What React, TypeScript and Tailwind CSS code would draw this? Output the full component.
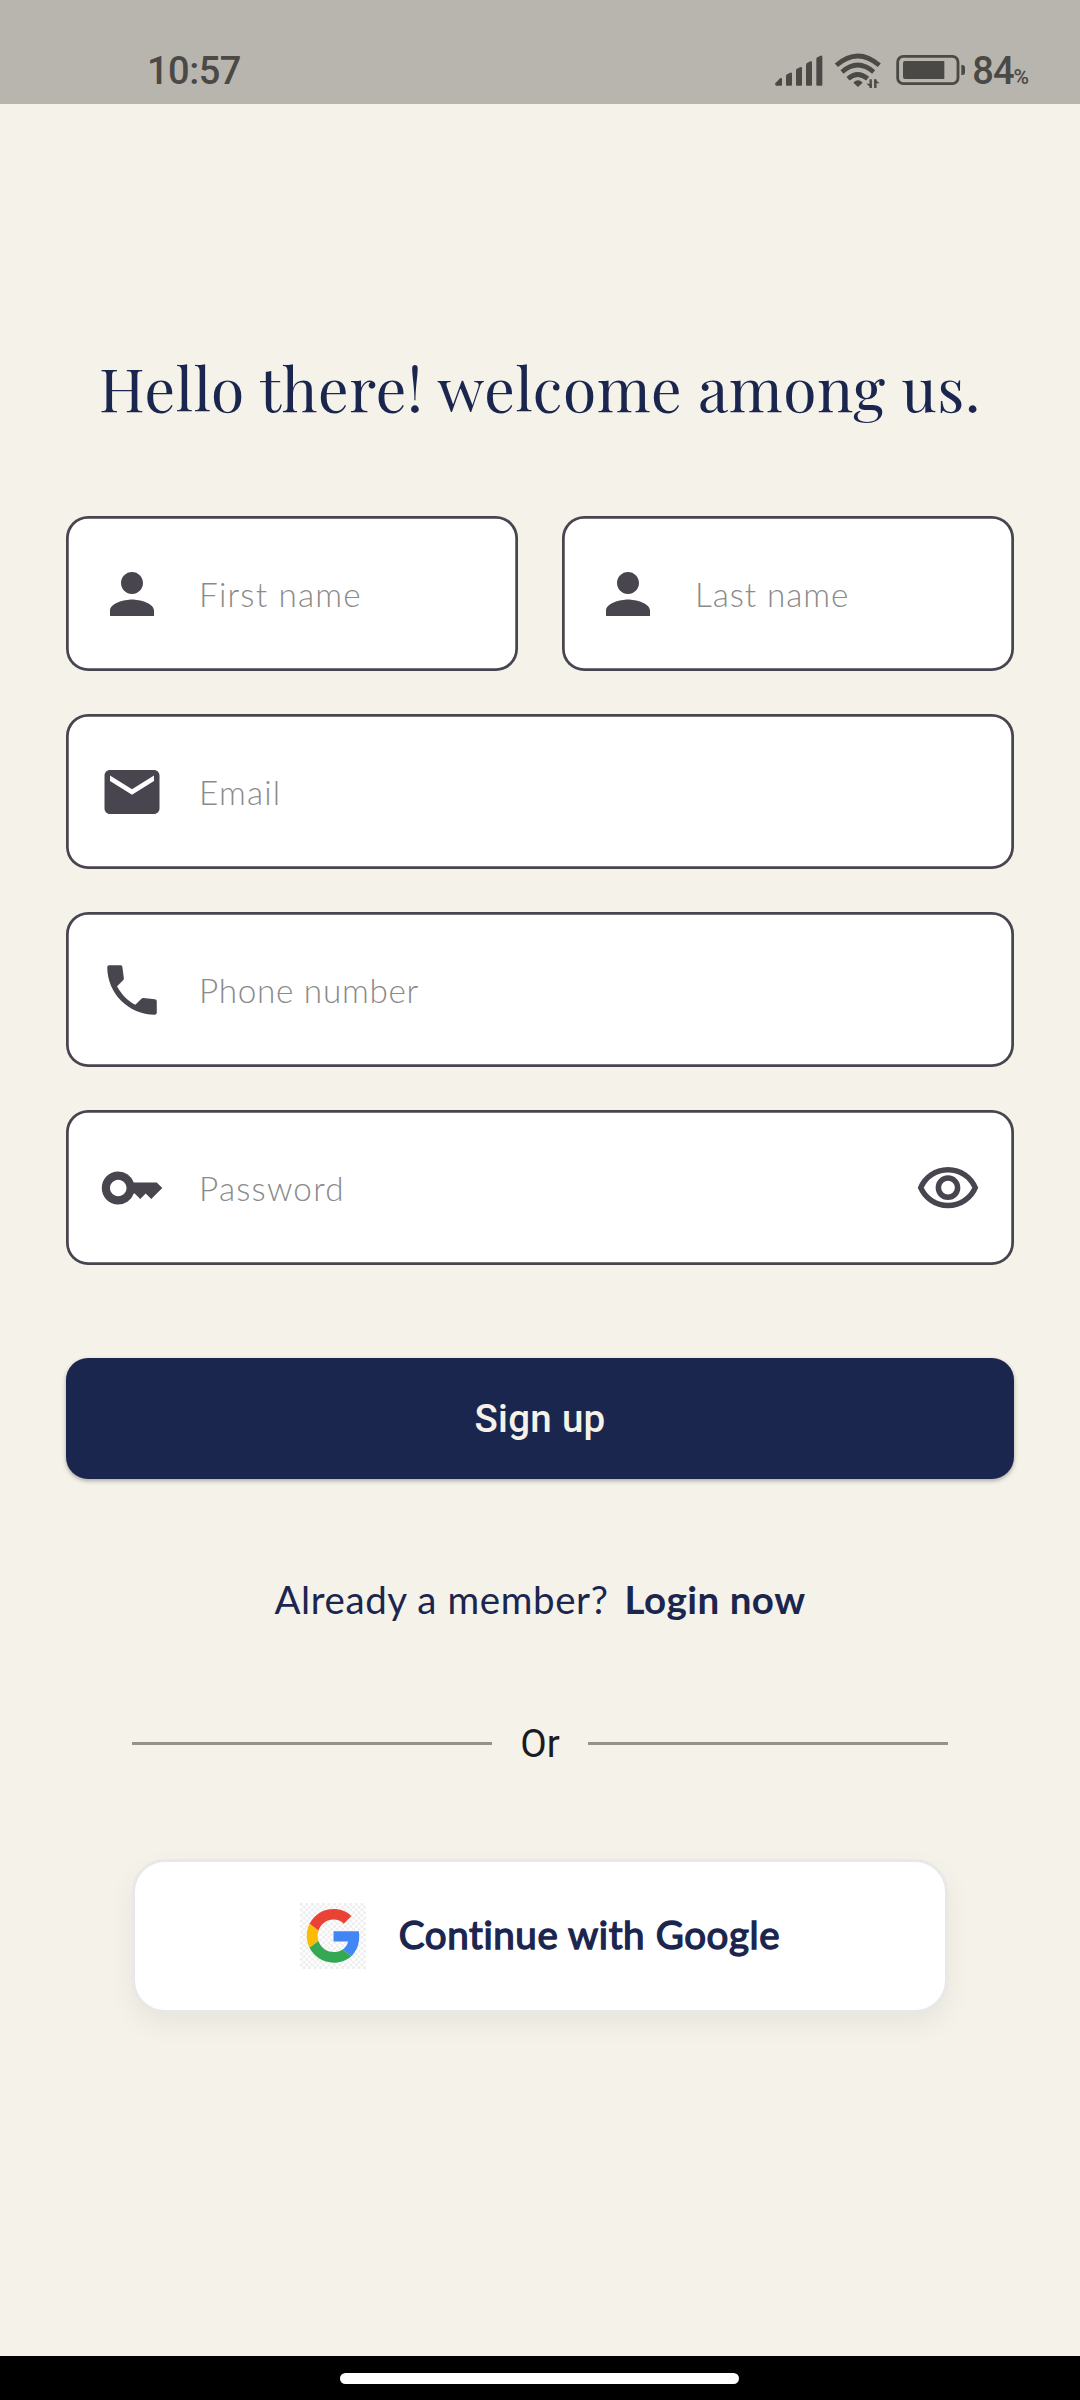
import type { ReactNode } from "react";
import { MdEmail, MdKey, MdOutlineVisibility, MdPerson } from "react-icons/md";

function SignalIcon() {
  return (
    <svg className="h-10 w-[50px]" viewBox="100 60 150 120" fill="currentColor">
      <path d="M104 160l14-15q6-3 6 2v17q0 3-3 3h-14q-5 0-3-7z" />
      <path d="M136 138q0-3 3-5l10-5q5-1 5 3v33q0 3-3 3h-12q-3 0-3-3z" />
      <path d="M166 121q0-3 3-5l10-5q5-1 5 3v50q0 3-3 3h-12q-3 0-3-3z" />
      <path d="M196 104q0-3 3-5l10-5q5-1 5 3v67q0 3-3 3h-12q-3 0-3-3z" />
      <path d="M227 87q0-3 3-5l10-5q5-1 5 3v84q0 3-3 3h-12q-3 0-3-3z" />
    </svg>
  );
}

function WifiIcon() {
  return (
    <svg className="h-10 w-[48px]" viewBox="282 60 144 120" fill="none" stroke="currentColor" strokeWidth="14">
      <path d="M289 106q64-56 129 0" />
      <path d="M306 126q47-42 95 0" />
      <path d="M324 146q29-25 59 0" />
      <path d="M340 158q14-14 28 0l-14 13z" fill="currentColor" stroke="none" />
      <path d="M392 148v26M406 174v-26" strokeWidth="7" />
      <path d="M379 161h16v13zM403 147v13h16z" fill="currentColor" stroke="none" />
    </svg>
  );
}

function BatteryIcon() {
  return (
    <svg className="h-10 w-[70px]" viewBox="467 60 210 120">
      <rect x="472" y="79" width="181" height="82" rx="17" fill="none" stroke="currentColor" strokeWidth="8.5" />
      <path d="M494 93h118v54H494q-6 0-6-6V99q0-6 6-6z" fill="currentColor" />
      <path d="M663 105h5q6 2 6 7v16q0 5-6 7h-5z" fill="currentColor" />
    </svg>
  );
}

function PhoneIcon() {
  return (
    <svg className="size-[66px]" viewBox="0 0 24 24" fill="currentColor">
      <path d="M3.7 3h4.1c.4 0 .65.25.7.65l.55 4.1c.03.25-.05.45-.2.6L6.58 10.6c1.46 2.85 3.78 5.24 6.63 6.8l2.3-2.3c.2-.2.4-.26.65-.22l4.15.5c.4.05.7.35.7.7v4.2c0 .4-.3.7-.7.7C10.8 21 3 13.2 3 3.7c0-.4.3-.7.7-.7z" />
    </svg>
  );
}

function GoogleIcon() {
  return (
    <svg className="size-[66px]" viewBox="0 0 66 66">
      <defs>
        <pattern id="checker" width="5.5" height="5.5" patternUnits="userSpaceOnUse">
          <rect width="5.5" height="5.5" fill="#ffffff" />
          <rect width="2.75" height="2.75" fill="#eeeeee" />
          <rect x="2.75" y="2.75" width="2.75" height="2.75" fill="#eeeeee" />
        </pattern>
      </defs>
      <rect width="66" height="66" fill="url(#checker)" />
      <g transform="translate(6.7 6) scale(1.118)">
        <path fill="#EA4335" d="M24 9.5c3.54 0 6.71 1.22 9.21 3.6l6.85-6.85C35.9 2.38 30.47 0 24 0 14.62 0 6.51 5.38 2.56 13.22l7.98 6.19C12.43 13.72 17.74 9.5 24 9.5z" />
        <path fill="#4285F4" d="M46.98 24.55c0-1.57-.15-3.09-.38-4.55H24v9.02h12.94c-.58 2.96-2.26 5.48-4.78 7.18l7.73 6c4.51-4.18 7.09-10.36 7.09-17.65z" />
        <path fill="#FBBC05" d="M10.53 28.59c-.48-1.45-.76-2.99-.76-4.59s.27-3.14.76-4.59l-7.98-6.19C.92 16.46 0 20.12 0 24c0 3.88.92 7.54 2.56 10.78l7.97-6.19z" />
        <path fill="#34A853" d="M24 48c6.48 0 11.93-2.13 15.89-5.81l-7.73-6c-2.15 1.45-4.92 2.3-8.16 2.3-6.26 0-11.57-4.22-13.47-9.91l-7.98 6.19C6.51 42.62 14.62 48 24 48z" />
      </g>
    </svg>
  );
}

type FieldProps = { icon: ReactNode; label: string; tracking?: string; trailing?: ReactNode };

function Field({ icon, label, tracking = "tracking-[1.2px]", trailing }: FieldProps) {
  return (
    <div className="flex h-[155px] flex-1 items-center rounded-[22px] bg-white px-[33px] text-[#49454f] shadow-[inset_0_0_0_2.75px_#49454f]">
      {icon}
      <span className={`ml-[34px] flex-1 text-[33.3px] leading-[44px] font-light text-[#8a8a8a] ${tracking}`}>{label}</span>
      {trailing}
    </div>
  );
}

export default function App() {
  return (
    <div className="flex h-[2400px] w-[1080px] flex-col overflow-hidden bg-[#f5f2ea] font-['Lato',sans-serif] text-[#1b264f]">
      <header className="flex h-[104px] items-start justify-between bg-[#b8b5ae] pt-[50px] pr-[52px] pl-[147px] font-['Roboto',sans-serif] text-[#4a4945]">
        <span className="text-[38px] leading-[42px] font-medium tracking-[-0.5px]">10:57</span>
        <div className="flex items-start">
          <SignalIcon />
          <span className="ml-[10px]">
            <WifiIcon />
          </span>
          <span className="ml-[14px]">
            <BatteryIcon />
          </span>
          <span className="ml-[6px] text-[38px] leading-[42px] font-medium tracking-[-1px]">
            84<span className="text-[21px]">%</span>
          </span>
        </div>
      </header>

      <main className="flex flex-1 flex-col px-[66px]">
        <h1 className="mt-[243px] flex h-[80px] items-center justify-center text-center font-['Playfair_Display','Liberation_Serif',serif] text-[60.5px] leading-[80px] font-normal tracking-[0.65px] whitespace-nowrap">
          Hello there! welcome among us.
        </h1>

        <form className="mt-[89px] flex flex-col gap-[43px]">
          <div className="flex gap-[44px]">
            <Field icon={<MdPerson className="size-[66px]" />} label="First name" />
            <Field icon={<MdPerson className="size-[66px]" />} label="Last name" tracking="tracking-[0.9px]" />
          </div>
          <div className="flex">
            <Field icon={<MdEmail className="size-[66px]" />} label="Email" />
          </div>
          <div className="flex">
            <Field icon={<PhoneIcon />} label="Phone number" tracking="tracking-[0.7px]" />
          </div>
          <div className="flex">
            <Field
              icon={<MdKey className="size-[66px]" />}
              label="Password"
              trailing={<MdOutlineVisibility className="mt-[2px] size-[66px]" />}
            />
          </div>
        </form>

        <button className="mt-[93px] h-[121px] rounded-[22px] bg-[#1b264f] font-['Roboto',sans-serif] text-[38.5px] leading-[55px] font-medium tracking-[0.3px] text-[#f5f2ea] shadow-[0_2px_4px_rgba(0,0,0,0.3)]">
          Sign up
        </button>

        <p className="mt-[92px] flex items-baseline justify-center gap-[16px] text-[38.5px] leading-[56px] tracking-[0.6px]">
          <span>Already a member?</span>
          <span className="font-bold tracking-[0.5px]">Login now</span>
        </p>

        <div className="mx-[66px] mt-[86px] flex h-[60px] items-center">
          <span className="h-[3px] flex-1 bg-[#93928e]" />
          <span className="w-[96px] pt-px text-center font-['Roboto',sans-serif] text-[38.5px] leading-[56px] text-[#1c1b1f]">Or</span>
          <span className="h-[3px] flex-1 bg-[#93928e]" />
        </div>

        <button className="mx-[66px] mt-[86px] flex h-[154px] items-center justify-center gap-[33px] rounded-[33px] border-[3px] border-[#e8e8e8] bg-white shadow-[0_11px_28px_rgba(0,0,0,0.06)]">
          <GoogleIcon />
          <span className="-mt-[5px] text-[38.5px] leading-[56px] font-normal tracking-[0.6px] [-webkit-text-stroke:1.4px_#1b264f]">
            Continue with Google
          </span>
        </button>
      </main>

      <footer className="flex h-[44px] justify-center bg-black pt-[17px] pr-[2px]">
        <span className="h-[11px] w-[399px] rounded-[5.5px] bg-white" />
      </footer>
    </div>
  );
}
